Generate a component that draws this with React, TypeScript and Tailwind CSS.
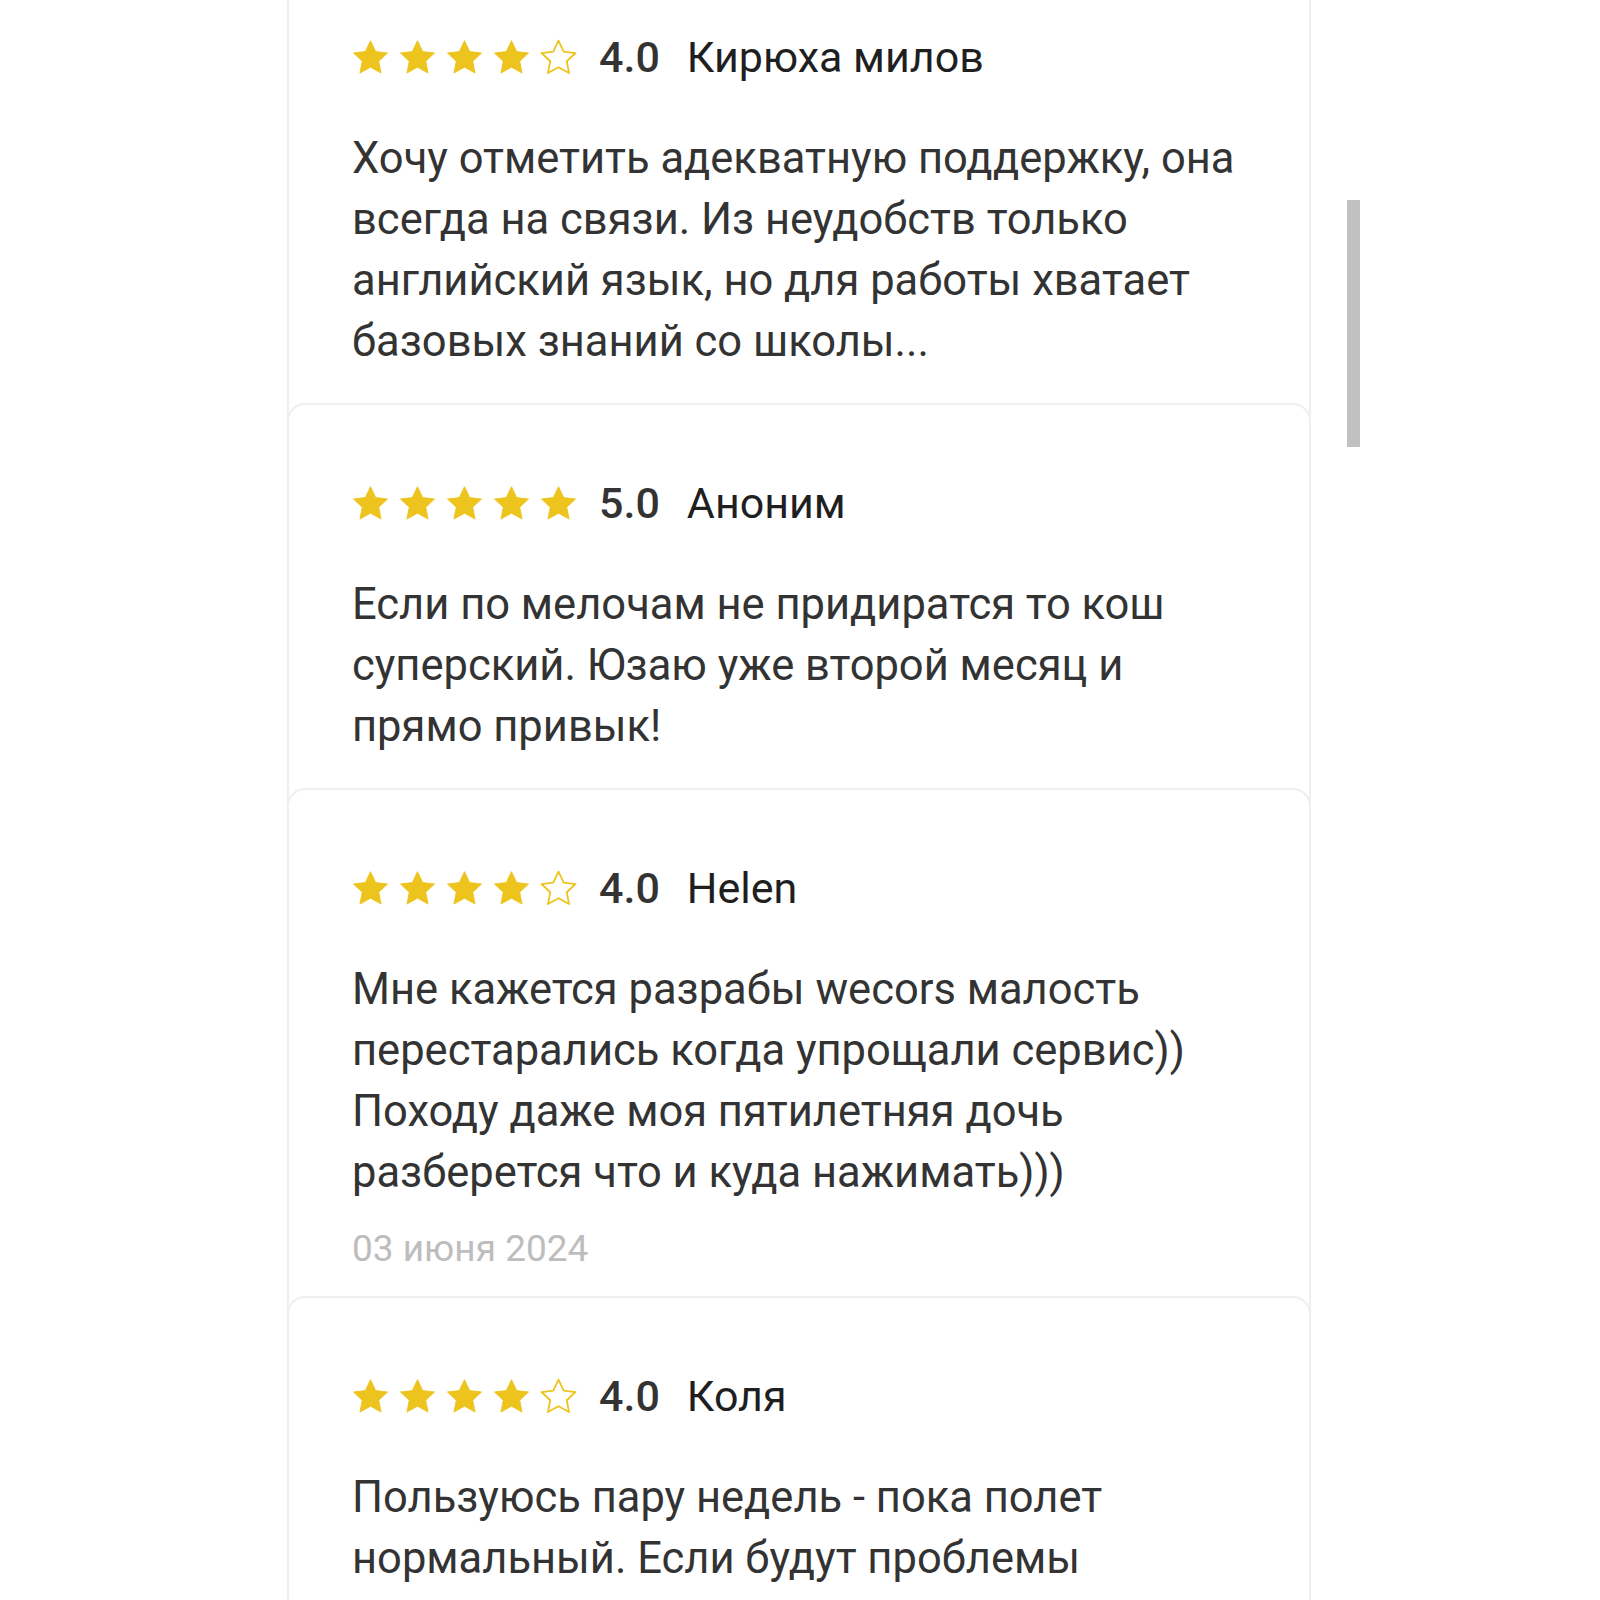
const reviews = [
  {
    rating: 4,
    name: 'Кирюха милов',
    lines: [
      'Хочу отметить адекватную поддержку, она',
      'всегда на связи. Из неудобств только',
      'английский язык, но для работы хватает',
      'базовых знаний со школы...',
    ],
  },
  {
    rating: 5,
    name: 'Аноним',
    lines: ['Если по мелочам не придиратся то кош', 'суперский. Юзаю уже второй месяц и', 'прямо привык!'],
  },
  {
    rating: 4,
    name: 'Helen',
    lines: [
      'Мне кажется разрабы wecors малость',
      'перестарались когда упрощали сервис))',
      'Походу даже моя пятилетняя дочь',
      'разберется что и куда нажимать)))',
    ],
    date: '03 июня 2024',
  },
  {
    rating: 4,
    name: 'Коля',
    lines: ['Пользуюсь пару недель - пока полет', 'нормальный. Если будут проблемы'],
  },
];

function Star({ filled }: { filled: boolean }) {
  return (
    <svg width="43" height="43" viewBox="0 0 24 24">
      <path
        d="M12 2.6l2.9 6.1 6.6.8-4.9 4.6 1.3 6.6L12 17.4l-5.9 3.3 1.3-6.6-4.9-4.6 6.6-.8z"
        fill={filled ? '#edc41d' : 'none'}
        stroke="#edc41d"
        strokeWidth={filled ? 0.5 : 1}
        strokeLinejoin="round"
      />
    </svg>
  );
}

export default function App() {
  return (
    <div className="relative h-[1600px] overflow-hidden bg-white" style={{ fontFamily: 'Roboto, "Noto Sans", sans-serif' }}>
      <div className="ml-[287px] w-[1024px] -mt-[43px] border-x-2 border-[#efefef]">
        {reviews.map((r, i) => (
          <div key={i} className="-mx-[2px] rounded-t-[18px] border-x-2 border-t-2 border-[#efefef] bg-white pl-[60px] pr-[30px] pt-[68px] pb-[31px]">
            <div className="flex h-[61px] items-center">
              <div className="flex gap-[4px]">
                {[0, 1, 2, 3, 4].map((s) => (
                  <Star key={s} filled={s < r.rating} />
                ))}
              </div>
              <span className="ml-[19px] text-[43px] font-medium leading-none text-[#333]">{r.rating.toFixed(1)}</span>
              <span className="ml-[27px] text-[43px] leading-none text-[#1f1f1f]">{r.name}</span>
            </div>
            <div className="mt-[40px] pl-[3px] text-[43.5px] leading-[61px] text-[#333]">
              {r.lines.map((l, j) => (
                <div key={j} className="whitespace-nowrap">
                  {l}
                </div>
              ))}
            </div>
            {r.date && <div className="mt-[30px] pl-[3px] text-[37px] leading-[32px] text-[#bdbdbd]">{r.date}</div>}
          </div>
        ))}
      </div>
      <div className="absolute left-[1347px] top-[200px] h-[247px] w-[13px] bg-[#c1c1c1]" />
    </div>
  );
}
